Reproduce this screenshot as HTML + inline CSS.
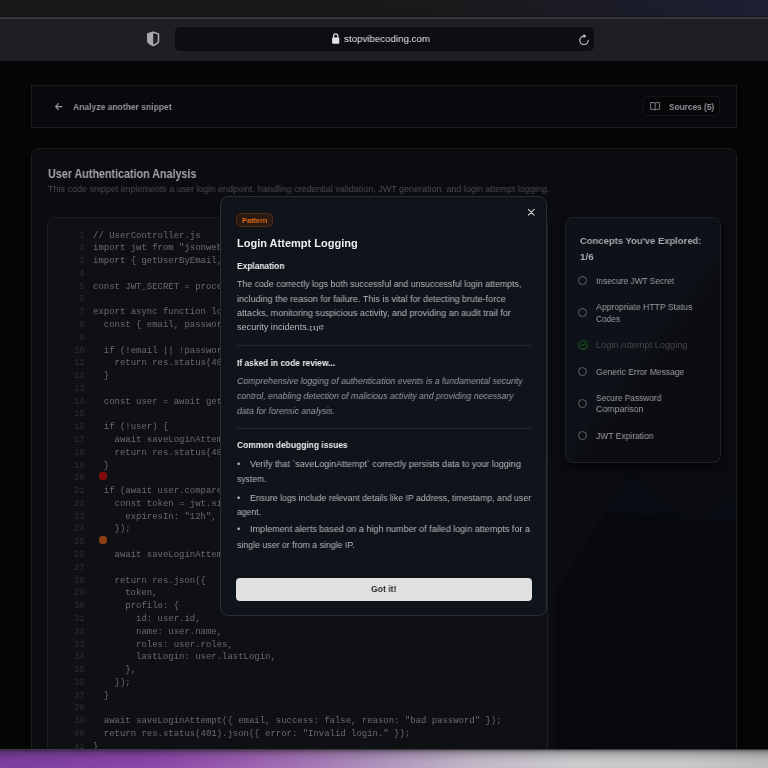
<!DOCTYPE html>
<html><head><meta charset="utf-8">
<style>
*{margin:0;padding:0;box-sizing:border-box}
html,body{width:768px;height:768px;overflow:hidden;background:#050505;font-family:"Liberation Sans",sans-serif}
.abs{position:absolute}
.tx{position:absolute;white-space:pre;transform-origin:0 50%;will-change:transform}
#top{left:0;top:0;width:768px;height:17px;background:linear-gradient(90deg,#1a1718 0%,#1a1819 55%,#1b1c28 80%,#1d1f33 100%)}
#tline{left:0;top:17px;width:768px;height:2px;background:#36383c}
#chrome{left:0;top:19px;width:768px;height:42px;background:#1e1f23}
#url{left:174.5px;top:27px;width:419px;height:23.5px;border-radius:5px;background:#0d0e12}
#hdr{left:31px;top:85px;width:706px;height:42.6px;border:1px solid #1a1c22;background:#08090d}
#srcbtn{left:643.4px;top:96.2px;width:76.8px;height:19.8px;border:1px solid #141519;border-radius:4px;background:#060608}
#card{left:31.25px;top:148px;width:705.5px;height:660px;border:1px solid #1b1d23;border-radius:8px;background:#0b0c10}
#code{left:47.4px;top:216.8px;width:501px;height:600px;border:1px solid #1e1f22;border-radius:8px;background:#0f1013}
#concepts{left:564.8px;top:217.4px;width:156px;height:246px;border:1px solid #1f2228;border-radius:8px;background:linear-gradient(127deg,#0e1118 0%,#0e1117 52%,#0b0d12 58%,#0b0c11 100%);box-shadow:0 5px 12px rgba(0,0,0,.6)}
#modal{left:220.1px;top:196.1px;width:327.4px;height:419.7px;border:1px solid #2a2d35;border-radius:8px;background:#0f131a}
#badge{left:236px;top:213px;width:37px;height:14.4px;border:1px solid #552b12;border-radius:5px;background:#281a12}
.div{position:absolute;left:236.2px;width:295.7px;height:1px;background:#232730}
#gotit{left:236.2px;top:577.6px;width:295.7px;height:23px;border-radius:4px;background:#e0e0e0}
#bottom{left:0;top:749px;width:768px;height:19px;border-top:1px solid #3a3a3c;background:linear-gradient(180deg,rgba(0,0,0,.45) 0px,rgba(0,0,0,.2) 3px,rgba(0,0,0,.06) 8px,rgba(0,0,0,0) 14px),linear-gradient(90deg,#7c3f9e 0%,#8a47a8 20%,#9c62b0 33%,#ae94bc 50%,#c2b8c8 62%,#cbcbcd 75%,#c8c8ca 90%,#bcbcbe 100%)}
.dot{position:absolute;width:8px;height:8px;border-radius:50%}
.circ{position:absolute;left:578px;width:9.4px;height:9.4px;border:1.1px solid #616368;border-radius:50%}
svg{position:absolute;overflow:visible}
</style></head>
<body>
<div class="abs" id="top"></div>
<div class="abs" style="left:0;top:15px;width:768px;height:2px;background:linear-gradient(180deg,rgba(10,10,12,0),rgba(12,12,14,.7))"></div>
<div class="abs" id="tline"></div>
<div class="abs" id="chrome"></div>
<div class="abs" id="url"></div>
<!-- shield -->
<svg style="left:146.6px;top:31px" width="14" height="16" viewBox="0 0 14 16">
<path d="M6.2 1.2 L11.5 2.9 V10 C11.5 11.3 9 13.3 6.2 14.4 C3.4 13.3 0.9 11.3 0.9 10 V2.9 Z" fill="none" stroke="#a9a9ac" stroke-width="1.6" stroke-linejoin="round"/>
<path d="M6.2 0.6 L0.3 2.5 V10.1 C0.3 11.6 3.1 13.7 6.2 14.9 Z" fill="#a9a9ac"/>
</svg>
<!-- lock -->
<svg style="left:331.8px;top:33.4px" width="7.4" height="10.8" viewBox="0 0 7.4 10.8">
<path d="M1.55 5 V3.4 C1.55 1.8 2.5 0.75 3.7 0.75 C4.9 0.75 5.85 1.8 5.85 3.4 V5" fill="none" stroke="#dcdcde" stroke-width="1.25"/>
<rect x="0.1" y="4.4" width="7.2" height="6.3" rx="1" fill="#e4e4e6"/>
</svg>
<!-- reload -->
<svg style="left:578.8px;top:34.5px" width="10" height="11" viewBox="0 0 10 11">
<path d="M9.2 5.3 A4.2 4.2 0 1 1 5 1.1" fill="none" stroke="#c8c8ca" stroke-width="1.15" stroke-linecap="round"/>
<path d="M4.6 -1.0 L7.3 1.1 L4.6 3.2 Z" fill="#c8c8ca"/>
</svg>
<div class="abs" id="hdr"></div>
<!-- arrow -->
<svg style="left:55.1px;top:102.9px" width="7.2" height="7.2" viewBox="0 0 7.2 7.2">
<path d="M6.8 3.6 H0.6 M3.4 0.7 L0.6 3.6 L3.4 6.5" fill="none" stroke="#9a9ba0" stroke-width="1.15" stroke-linecap="round" stroke-linejoin="round"/>
</svg>
<div class="abs" id="srcbtn"></div>
<!-- book -->
<svg style="left:649.9px;top:101.9px" width="10.2" height="8.6" viewBox="0 0 10.2 8.6">
<path d="M5.1 1.6 C5.1 1 4.7 0.6 4.1 0.6 H0.6 V7.4 H4.1 C4.7 7.4 5.1 7.8 5.1 8.3 C5.1 7.8 5.5 7.4 6.1 7.4 H9.6 V0.6 H6.1 C5.5 0.6 5.1 1 5.1 1.6 Z M5.1 1.6 V8.2" fill="none" stroke="#7c7d82" stroke-width="1" stroke-linejoin="round"/>
</svg>
<div class="abs" id="card"></div>
<svg style="left:0;top:0" width="768" height="768" viewBox="0 0 768 768">
<polygon points="556,592 629,474 698,527 728,493 735.5,500 735.5,750 556,750" fill="#090b12"/>
<polygon points="556,592 605,513 690,520 735.5,522 735.5,750 556,750" fill="#08090c"/>
</svg>
<div class="abs" id="code"></div>
<div class="dot" style="left:99px;top:472.4px;background:#7e0a0a;box-shadow:0 0 0.6px #a02010"></div>
<div class="dot" style="left:99px;top:536.3px;background:#8a4012;box-shadow:0 0 0.6px #902a10"></div>
<div class="abs" id="concepts"></div>
<div class="circ" style="top:276.1px"></div>
<div class="circ" style="top:308px"></div>
<div class="circ" style="top:367px"></div>
<div class="circ" style="top:398.5px"></div>
<div class="circ" style="top:430.8px"></div>
<svg style="left:577.8px;top:339.7px" width="10" height="10" viewBox="0 0 10 10">
<path d="M9.2 4.6 V5 A4.2 4.2 0 1 1 6.7 1.2" fill="none" stroke="#145020" stroke-width="1.3" stroke-linecap="round"/>
<path d="M9.2 1.6 L5 5.8 L3.6 4.4" fill="none" stroke="#145020" stroke-width="1.3" stroke-linecap="round" stroke-linejoin="round"/>
</svg>
<div class="tx" style="left:344.20px;top:34.22px;font-size:9.9px;line-height:9.9px;color:#e4e4e4;transform:scaleX(0.9853);">stopvibecoding.com</div>
<div class="tx" style="left:72.90px;top:101.77px;font-size:9.6px;line-height:9.6px;color:#939498;font-weight:700;transform:scaleX(0.8892);">Analyze another snippet</div>
<div class="tx" style="left:668.75px;top:101.87px;font-size:9.6px;line-height:9.6px;color:#939498;font-weight:700;transform:scaleX(0.8658);">Sources (5)</div>
<div class="tx" style="left:47.80px;top:167.72px;font-size:12.5px;line-height:12.5px;color:#a4a6ab;font-weight:700;transform:scaleX(0.8591);">User Authentication Analysis</div>
<div class="tx" style="left:47.80px;top:185.18px;font-size:9.0px;line-height:9.0px;color:#4a4c52;transform:scaleX(0.9971);">This code snippet implements a user login endpoint, handling credential validation, JWT generation, and login attempt logging.</div>
<div class="tx" style="left:79.02px;top:231.54px;font-size:8.96px;line-height:8.96px;color:#2e2f33;font-family:'Liberation Mono',monospace;transform:scaleX(1.0002);">1</div>
<div class="tx" style="left:93.30px;top:231.54px;font-size:8.96px;line-height:8.96px;color:#6a6b6e;font-family:'Liberation Mono',monospace;transform:scaleX(1.0005);">// UserController.js</div>
<div class="tx" style="left:79.02px;top:244.32px;font-size:8.96px;line-height:8.96px;color:#2e2f33;font-family:'Liberation Mono',monospace;transform:scaleX(1.0002);">2</div>
<div class="tx" style="left:93.30px;top:244.32px;font-size:8.96px;line-height:8.96px;color:#6a6b6e;font-family:'Liberation Mono',monospace;transform:scaleX(1.0006);">import jwt from "jsonwebtoken";</div>
<div class="tx" style="left:79.02px;top:257.10px;font-size:8.96px;line-height:8.96px;color:#2e2f33;font-family:'Liberation Mono',monospace;transform:scaleX(1.0002);">3</div>
<div class="tx" style="left:93.30px;top:257.10px;font-size:8.96px;line-height:8.96px;color:#6a6b6e;font-family:'Liberation Mono',monospace;transform:scaleX(1.0006);">import { getUserByEmail, saveLoginAttempt } from "./userService";</div>
<div class="tx" style="left:79.02px;top:269.88px;font-size:8.96px;line-height:8.96px;color:#2e2f33;font-family:'Liberation Mono',monospace;transform:scaleX(1.0002);">4</div>
<div class="tx" style="left:79.02px;top:282.66px;font-size:8.96px;line-height:8.96px;color:#2e2f33;font-family:'Liberation Mono',monospace;transform:scaleX(1.0002);">5</div>
<div class="tx" style="left:93.30px;top:282.66px;font-size:8.96px;line-height:8.96px;color:#6a6b6e;font-family:'Liberation Mono',monospace;transform:scaleX(1.0006);">const JWT_SECRET = process.env.JWT_SECRET || "secret";</div>
<div class="tx" style="left:79.02px;top:295.44px;font-size:8.96px;line-height:8.96px;color:#2e2f33;font-family:'Liberation Mono',monospace;transform:scaleX(1.0002);">6</div>
<div class="tx" style="left:79.02px;top:308.22px;font-size:8.96px;line-height:8.96px;color:#2e2f33;font-family:'Liberation Mono',monospace;transform:scaleX(1.0002);">7</div>
<div class="tx" style="left:93.30px;top:308.22px;font-size:8.96px;line-height:8.96px;color:#6a6b6e;font-family:'Liberation Mono',monospace;transform:scaleX(1.0006);">export async function login(req, res) {</div>
<div class="tx" style="left:79.02px;top:321.00px;font-size:8.96px;line-height:8.96px;color:#2e2f33;font-family:'Liberation Mono',monospace;transform:scaleX(1.0002);">8</div>
<div class="tx" style="left:93.30px;top:321.00px;font-size:8.96px;line-height:8.96px;color:#6a6b6e;font-family:'Liberation Mono',monospace;transform:scaleX(1.0006);">  const { email, password } = req.body;</div>
<div class="tx" style="left:79.02px;top:333.78px;font-size:8.96px;line-height:8.96px;color:#2e2f33;font-family:'Liberation Mono',monospace;transform:scaleX(1.0002);">9</div>
<div class="tx" style="left:73.65px;top:346.56px;font-size:8.96px;line-height:8.96px;color:#2e2f33;font-family:'Liberation Mono',monospace;transform:scaleX(1.0002);">10</div>
<div class="tx" style="left:93.30px;top:346.56px;font-size:8.96px;line-height:8.96px;color:#6a6b6e;font-family:'Liberation Mono',monospace;transform:scaleX(1.0006);">  if (!email || !password) {</div>
<div class="tx" style="left:73.65px;top:359.34px;font-size:8.96px;line-height:8.96px;color:#2e2f33;font-family:'Liberation Mono',monospace;transform:scaleX(1.0002);">11</div>
<div class="tx" style="left:93.30px;top:359.34px;font-size:8.96px;line-height:8.96px;color:#6a6b6e;font-family:'Liberation Mono',monospace;transform:scaleX(1.0006);">    return res.status(400).json({ error: "Email and password required." });</div>
<div class="tx" style="left:73.65px;top:372.12px;font-size:8.96px;line-height:8.96px;color:#2e2f33;font-family:'Liberation Mono',monospace;transform:scaleX(1.0002);">12</div>
<div class="tx" style="left:93.30px;top:372.12px;font-size:8.96px;line-height:8.96px;color:#6a6b6e;font-family:'Liberation Mono',monospace;transform:scaleX(1.0002);">  }</div>
<div class="tx" style="left:73.65px;top:384.90px;font-size:8.96px;line-height:8.96px;color:#2e2f33;font-family:'Liberation Mono',monospace;transform:scaleX(1.0002);">13</div>
<div class="tx" style="left:73.65px;top:397.68px;font-size:8.96px;line-height:8.96px;color:#2e2f33;font-family:'Liberation Mono',monospace;transform:scaleX(1.0002);">14</div>
<div class="tx" style="left:93.30px;top:397.68px;font-size:8.96px;line-height:8.96px;color:#6a6b6e;font-family:'Liberation Mono',monospace;transform:scaleX(1.0006);">  const user = await getUserByEmail(email);</div>
<div class="tx" style="left:73.65px;top:410.46px;font-size:8.96px;line-height:8.96px;color:#2e2f33;font-family:'Liberation Mono',monospace;transform:scaleX(1.0002);">15</div>
<div class="tx" style="left:73.65px;top:423.24px;font-size:8.96px;line-height:8.96px;color:#2e2f33;font-family:'Liberation Mono',monospace;transform:scaleX(1.0002);">16</div>
<div class="tx" style="left:93.30px;top:423.24px;font-size:8.96px;line-height:8.96px;color:#6a6b6e;font-family:'Liberation Mono',monospace;transform:scaleX(1.0006);">  if (!user) {</div>
<div class="tx" style="left:73.65px;top:436.02px;font-size:8.96px;line-height:8.96px;color:#2e2f33;font-family:'Liberation Mono',monospace;transform:scaleX(1.0002);">17</div>
<div class="tx" style="left:93.30px;top:436.02px;font-size:8.96px;line-height:8.96px;color:#6a6b6e;font-family:'Liberation Mono',monospace;transform:scaleX(1.0006);">    await saveLoginAttempt({ email, success: false, reason: "user not found" });</div>
<div class="tx" style="left:73.65px;top:448.80px;font-size:8.96px;line-height:8.96px;color:#2e2f33;font-family:'Liberation Mono',monospace;transform:scaleX(1.0002);">18</div>
<div class="tx" style="left:93.30px;top:448.80px;font-size:8.96px;line-height:8.96px;color:#6a6b6e;font-family:'Liberation Mono',monospace;transform:scaleX(1.0006);">    return res.status(401).json({ error: "Invalid login." });</div>
<div class="tx" style="left:73.65px;top:461.58px;font-size:8.96px;line-height:8.96px;color:#2e2f33;font-family:'Liberation Mono',monospace;transform:scaleX(1.0002);">19</div>
<div class="tx" style="left:93.30px;top:461.58px;font-size:8.96px;line-height:8.96px;color:#6a6b6e;font-family:'Liberation Mono',monospace;transform:scaleX(1.0002);">  }</div>
<div class="tx" style="left:73.65px;top:474.36px;font-size:8.96px;line-height:8.96px;color:#2e2f33;font-family:'Liberation Mono',monospace;transform:scaleX(1.0002);">20</div>
<div class="tx" style="left:73.65px;top:487.14px;font-size:8.96px;line-height:8.96px;color:#2e2f33;font-family:'Liberation Mono',monospace;transform:scaleX(1.0002);">21</div>
<div class="tx" style="left:93.30px;top:487.14px;font-size:8.96px;line-height:8.96px;color:#6a6b6e;font-family:'Liberation Mono',monospace;transform:scaleX(1.0006);">  if (await user.comparePassword(password)) {</div>
<div class="tx" style="left:73.65px;top:499.92px;font-size:8.96px;line-height:8.96px;color:#2e2f33;font-family:'Liberation Mono',monospace;transform:scaleX(1.0002);">22</div>
<div class="tx" style="left:93.30px;top:499.92px;font-size:8.96px;line-height:8.96px;color:#6a6b6e;font-family:'Liberation Mono',monospace;transform:scaleX(1.0006);">    const token = jwt.sign({ id: user.id }, JWT_SECRET, {</div>
<div class="tx" style="left:73.65px;top:512.70px;font-size:8.96px;line-height:8.96px;color:#2e2f33;font-family:'Liberation Mono',monospace;transform:scaleX(1.0002);">23</div>
<div class="tx" style="left:93.30px;top:512.70px;font-size:8.96px;line-height:8.96px;color:#6a6b6e;font-family:'Liberation Mono',monospace;transform:scaleX(1.0006);">      expiresIn: "12h",</div>
<div class="tx" style="left:73.65px;top:525.48px;font-size:8.96px;line-height:8.96px;color:#2e2f33;font-family:'Liberation Mono',monospace;transform:scaleX(1.0002);">24</div>
<div class="tx" style="left:93.30px;top:525.48px;font-size:8.96px;line-height:8.96px;color:#6a6b6e;font-family:'Liberation Mono',monospace;transform:scaleX(1.0006);">    });</div>
<div class="tx" style="left:73.65px;top:538.26px;font-size:8.96px;line-height:8.96px;color:#2e2f33;font-family:'Liberation Mono',monospace;transform:scaleX(1.0002);">25</div>
<div class="tx" style="left:73.65px;top:551.04px;font-size:8.96px;line-height:8.96px;color:#2e2f33;font-family:'Liberation Mono',monospace;transform:scaleX(1.0002);">26</div>
<div class="tx" style="left:93.30px;top:551.04px;font-size:8.96px;line-height:8.96px;color:#6a6b6e;font-family:'Liberation Mono',monospace;transform:scaleX(1.0006);">    await saveLoginAttempt({ email, success: true });</div>
<div class="tx" style="left:73.65px;top:563.82px;font-size:8.96px;line-height:8.96px;color:#2e2f33;font-family:'Liberation Mono',monospace;transform:scaleX(1.0002);">27</div>
<div class="tx" style="left:73.65px;top:576.60px;font-size:8.96px;line-height:8.96px;color:#2e2f33;font-family:'Liberation Mono',monospace;transform:scaleX(1.0002);">28</div>
<div class="tx" style="left:93.30px;top:576.60px;font-size:8.96px;line-height:8.96px;color:#6a6b6e;font-family:'Liberation Mono',monospace;transform:scaleX(1.0006);">    return res.json({</div>
<div class="tx" style="left:73.65px;top:589.38px;font-size:8.96px;line-height:8.96px;color:#2e2f33;font-family:'Liberation Mono',monospace;transform:scaleX(1.0002);">29</div>
<div class="tx" style="left:93.30px;top:589.38px;font-size:8.96px;line-height:8.96px;color:#6a6b6e;font-family:'Liberation Mono',monospace;transform:scaleX(1.0004);">      token,</div>
<div class="tx" style="left:73.65px;top:602.16px;font-size:8.96px;line-height:8.96px;color:#2e2f33;font-family:'Liberation Mono',monospace;transform:scaleX(1.0002);">30</div>
<div class="tx" style="left:93.30px;top:602.16px;font-size:8.96px;line-height:8.96px;color:#6a6b6e;font-family:'Liberation Mono',monospace;transform:scaleX(1.0005);">      profile: {</div>
<div class="tx" style="left:73.65px;top:614.94px;font-size:8.96px;line-height:8.96px;color:#2e2f33;font-family:'Liberation Mono',monospace;transform:scaleX(1.0002);">31</div>
<div class="tx" style="left:93.30px;top:614.94px;font-size:8.96px;line-height:8.96px;color:#6a6b6e;font-family:'Liberation Mono',monospace;transform:scaleX(1.0005);">        id: user.id,</div>
<div class="tx" style="left:73.65px;top:627.72px;font-size:8.96px;line-height:8.96px;color:#2e2f33;font-family:'Liberation Mono',monospace;transform:scaleX(1.0002);">32</div>
<div class="tx" style="left:93.30px;top:627.72px;font-size:8.96px;line-height:8.96px;color:#6a6b6e;font-family:'Liberation Mono',monospace;transform:scaleX(1.0005);">        name: user.name,</div>
<div class="tx" style="left:73.65px;top:640.50px;font-size:8.96px;line-height:8.96px;color:#2e2f33;font-family:'Liberation Mono',monospace;transform:scaleX(1.0002);">33</div>
<div class="tx" style="left:93.30px;top:640.50px;font-size:8.96px;line-height:8.96px;color:#6a6b6e;font-family:'Liberation Mono',monospace;transform:scaleX(1.0005);">        roles: user.roles,</div>
<div class="tx" style="left:73.65px;top:653.28px;font-size:8.96px;line-height:8.96px;color:#2e2f33;font-family:'Liberation Mono',monospace;transform:scaleX(1.0002);">34</div>
<div class="tx" style="left:93.30px;top:653.28px;font-size:8.96px;line-height:8.96px;color:#6a6b6e;font-family:'Liberation Mono',monospace;transform:scaleX(1.0005);">        lastLogin: user.lastLogin,</div>
<div class="tx" style="left:73.65px;top:666.06px;font-size:8.96px;line-height:8.96px;color:#2e2f33;font-family:'Liberation Mono',monospace;transform:scaleX(1.0002);">35</div>
<div class="tx" style="left:93.30px;top:666.06px;font-size:8.96px;line-height:8.96px;color:#6a6b6e;font-family:'Liberation Mono',monospace;transform:scaleX(1.0005);">      },</div>
<div class="tx" style="left:73.65px;top:678.84px;font-size:8.96px;line-height:8.96px;color:#2e2f33;font-family:'Liberation Mono',monospace;transform:scaleX(1.0002);">36</div>
<div class="tx" style="left:93.30px;top:678.84px;font-size:8.96px;line-height:8.96px;color:#6a6b6e;font-family:'Liberation Mono',monospace;transform:scaleX(1.0006);">    });</div>
<div class="tx" style="left:73.65px;top:691.62px;font-size:8.96px;line-height:8.96px;color:#2e2f33;font-family:'Liberation Mono',monospace;transform:scaleX(1.0002);">37</div>
<div class="tx" style="left:93.30px;top:691.62px;font-size:8.96px;line-height:8.96px;color:#6a6b6e;font-family:'Liberation Mono',monospace;transform:scaleX(1.0002);">  }</div>
<div class="tx" style="left:73.65px;top:704.40px;font-size:8.96px;line-height:8.96px;color:#2e2f33;font-family:'Liberation Mono',monospace;transform:scaleX(1.0002);">38</div>
<div class="tx" style="left:73.65px;top:717.18px;font-size:8.96px;line-height:8.96px;color:#2e2f33;font-family:'Liberation Mono',monospace;transform:scaleX(1.0002);">39</div>
<div class="tx" style="left:93.30px;top:717.18px;font-size:8.96px;line-height:8.96px;color:#6a6b6e;font-family:'Liberation Mono',monospace;transform:scaleX(1.0006);">  await saveLoginAttempt({ email, success: false, reason: "bad password" });</div>
<div class="tx" style="left:73.65px;top:729.96px;font-size:8.96px;line-height:8.96px;color:#2e2f33;font-family:'Liberation Mono',monospace;transform:scaleX(1.0002);">40</div>
<div class="tx" style="left:93.30px;top:729.96px;font-size:8.96px;line-height:8.96px;color:#6a6b6e;font-family:'Liberation Mono',monospace;transform:scaleX(1.0006);">  return res.status(401).json({ error: "Invalid login." });</div>
<div class="tx" style="left:73.65px;top:742.74px;font-size:8.96px;line-height:8.96px;color:#2e2f33;font-family:'Liberation Mono',monospace;transform:scaleX(1.0002);">41</div>
<div class="tx" style="left:93.30px;top:742.74px;font-size:8.96px;line-height:8.96px;color:#6a6b6e;font-family:'Liberation Mono',monospace;transform:scaleX(1.0002);">}</div>
<div class="tx" style="left:580.00px;top:236.00px;font-size:9.8px;line-height:9.8px;color:#a6a8ad;font-weight:700;transform:scaleX(0.9628);">Concepts You've Explored:</div>
<div class="tx" style="left:580.00px;top:252.00px;font-size:9.8px;line-height:9.8px;color:#a6a8ad;font-weight:700;">1/6</div>
<div class="tx" style="left:595.50px;top:277.21px;font-size:9.2px;line-height:9.2px;color:#9c9ea3;transform:scaleX(0.9111);">Insecure JWT Secret</div>
<div class="tx" style="left:595.50px;top:303.21px;font-size:9.2px;line-height:9.2px;color:#9c9ea3;transform:scaleX(0.9397);">Appropriate HTTP Status</div>
<div class="tx" style="left:595.50px;top:314.81px;font-size:9.2px;line-height:9.2px;color:#9c9ea3;transform:scaleX(0.9073);">Codes</div>
<div class="tx" style="left:595.50px;top:367.61px;font-size:9.2px;line-height:9.2px;color:#9c9ea3;transform:scaleX(0.9307);">Generic Error Message</div>
<div class="tx" style="left:595.50px;top:393.91px;font-size:9.2px;line-height:9.2px;color:#9c9ea3;transform:scaleX(0.9067);">Secure Password</div>
<div class="tx" style="left:595.50px;top:405.21px;font-size:9.2px;line-height:9.2px;color:#9c9ea3;transform:scaleX(0.9570);">Comparison</div>
<div class="tx" style="left:595.50px;top:431.51px;font-size:9.2px;line-height:9.2px;color:#9c9ea3;transform:scaleX(0.9239);">JWT Expiration</div>
<div class="tx" style="left:595.50px;top:340.61px;font-size:9.2px;line-height:9.2px;color:#44464b;transform:scaleX(0.9974);">Login Attempt Logging</div>
<div class="abs" id="modal"></div>
<div class="abs" id="badge"></div>
<svg style="left:528.3px;top:208.8px" width="6.5" height="6.5" viewBox="0 0 6.5 6.5">
<path d="M0.4 0.4 L6.1 6.1 M6.1 0.4 L0.4 6.1" fill="none" stroke="#cfd0d2" stroke-width="1.1" stroke-linecap="round"/>
</svg>
<div class="div" style="top:345.2px"></div>
<div class="div" style="top:427.5px"></div>
<div class="abs" id="gotit"></div>
<!-- citation -->
<div class="tx" style="left:309.5px;top:324.8px;font-size:6px;line-height:6px;letter-spacing:0.5px;color:#b8b9bc;font-weight:700">[1]</div>
<svg style="left:319px;top:324.8px" width="4.5" height="4.5" viewBox="0 0 4.5 4.5">
<path d="M2 0.8 H0.5 V4 H3.7 V2.5 M2.5 0.5 H4 V2 M4 0.5 L2 2.5" fill="none" stroke="#b4b6ba" stroke-width="0.7"/>
</svg>
<div class="tx" style="left:241.90px;top:216.98px;font-size:7.7px;line-height:7.7px;color:#e26c14;font-weight:700;transform:scaleX(0.9585);">Pattern</div>
<div class="tx" style="left:236.60px;top:238.49px;font-size:11.0px;line-height:11.0px;color:#eeeeef;font-weight:700;transform:scaleX(1.0011);">Login Attempt Logging</div>
<div class="tx" style="left:236.60px;top:261.56px;font-size:9.2px;line-height:9.2px;color:#eeeef0;font-weight:700;transform:scaleX(0.9102);">Explanation</div>
<div class="tx" style="left:236.60px;top:280.20px;font-size:9.1px;line-height:9.1px;color:#b8b9bd;transform:scaleX(0.9684);">The code correctly logs both successful and unsuccessful login attempts,</div>
<div class="tx" style="left:236.60px;top:294.60px;font-size:9.1px;line-height:9.1px;color:#b8b9bd;transform:scaleX(0.9927);">including the reason for failure. This is vital for detecting brute-force</div>
<div class="tx" style="left:236.60px;top:309.00px;font-size:9.1px;line-height:9.1px;color:#b8b9bd;transform:scaleX(0.9931);">attacks, monitoring suspicious activity, and providing an audit trail for</div>
<div class="tx" style="left:236.60px;top:323.40px;font-size:9.1px;line-height:9.1px;color:#b8b9bd;">security incidents.</div>
<div class="tx" style="left:236.60px;top:358.56px;font-size:9.2px;line-height:9.2px;color:#eeeef0;font-weight:700;transform:scaleX(0.9134);">If asked in code review...</div>
<div class="tx" style="left:236.60px;top:377.30px;font-size:9.1px;line-height:9.1px;color:#9a9ca1;font-style:italic;transform:scaleX(0.9608);">Comprehensive logging of authentication events is a fundamental security</div>
<div class="tx" style="left:236.60px;top:391.90px;font-size:9.1px;line-height:9.1px;color:#9a9ca1;font-style:italic;transform:scaleX(0.9599);">control, enabling detection of malicious activity and providing necessary</div>
<div class="tx" style="left:236.60px;top:406.50px;font-size:9.1px;line-height:9.1px;color:#9a9ca1;font-style:italic;transform:scaleX(0.9513);">data for forensic analysis.</div>
<div class="tx" style="left:236.60px;top:441.31px;font-size:9.2px;line-height:9.2px;color:#eeeef0;font-weight:700;transform:scaleX(0.9181);">Common debugging issues</div>
<div class="tx" style="left:249.50px;top:459.80px;font-size:9.1px;line-height:9.1px;color:#b8b9bd;transform:scaleX(0.9845);">Verify that `saveLoginAttempt` correctly persists data to your logging</div>
<div class="tx" style="left:236.60px;top:475.40px;font-size:9.1px;line-height:9.1px;color:#b8b9bd;transform:scaleX(0.9385);">system.</div>
<div class="tx" style="left:249.50px;top:493.50px;font-size:9.1px;line-height:9.1px;color:#b8b9bd;transform:scaleX(0.9610);">Ensure logs include relevant details like IP address, timestamp, and user</div>
<div class="tx" style="left:236.60px;top:507.90px;font-size:9.1px;line-height:9.1px;color:#b8b9bd;transform:scaleX(0.9448);">agent.</div>
<div class="tx" style="left:249.50px;top:525.20px;font-size:9.1px;line-height:9.1px;color:#b8b9bd;transform:scaleX(0.9926);">Implement alerts based on a high number of failed login attempts for a</div>
<div class="tx" style="left:236.60px;top:540.90px;font-size:9.1px;line-height:9.1px;color:#b8b9bd;transform:scaleX(0.9667);">single user or from a single IP.</div>
<div class="tx" style="left:236.60px;top:459.80px;font-size:9.1px;line-height:9.1px;color:#b8b9bd;">•</div>
<div class="tx" style="left:236.60px;top:493.50px;font-size:9.1px;line-height:9.1px;color:#b8b9bd;">•</div>
<div class="tx" style="left:236.60px;top:525.20px;font-size:9.1px;line-height:9.1px;color:#b8b9bd;">•</div>
<div class="tx" style="left:371.40px;top:584.14px;font-size:9.4px;line-height:9.4px;color:#2c2d30;font-weight:700;transform:scaleX(0.9236);">Got it!</div>
<div class="abs" id="bottom"></div>
</body></html>
